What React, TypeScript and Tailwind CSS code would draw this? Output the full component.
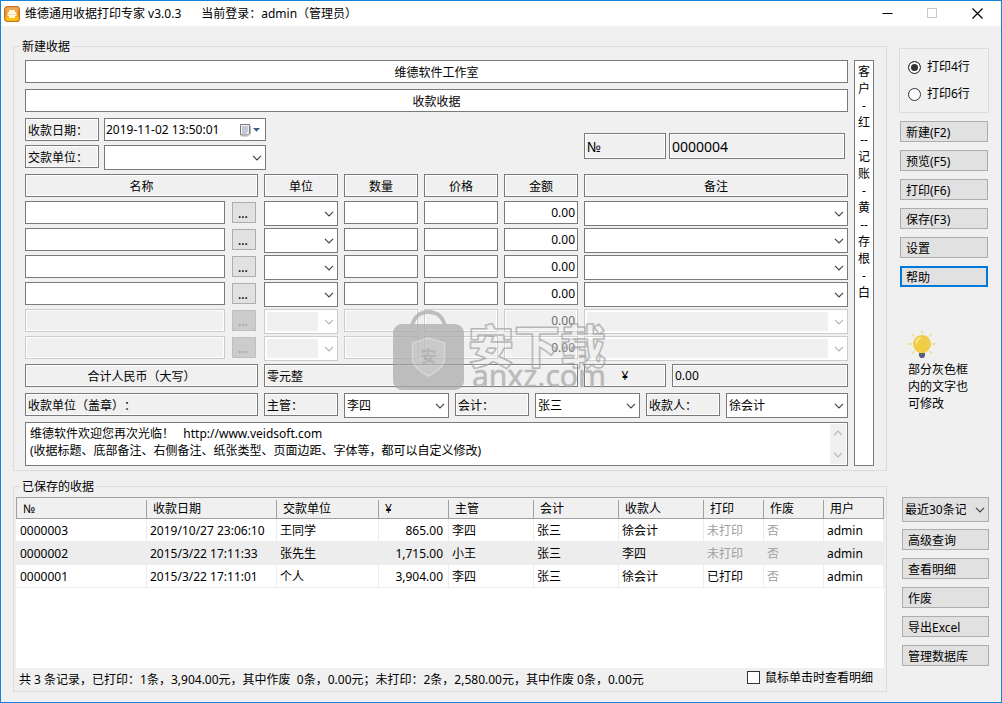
import { useState } from 'react';
import type { ReactNode } from 'react';
import clsx from 'clsx';

const field = 'block h-[23px] min-w-0 border border-[#7a7a7a] px-[2px] outline-none';
const gray = 'bg-[#f0f0f0] shadow-[inset_0_0_0_1px_#fff]';
const off = 'bg-[#f0f0f0] border-[#cccccc] text-[#6d6d6d] shadow-[inset_0_0_0_1px_#fff]';

const itemGrid = 'grid grid-cols-[233px_74px_74px_74px_74px_1fr] gap-x-[6px]';

const lines = [
  { id: 1, disabled: false },
  { id: 2, disabled: false },
  { id: 3, disabled: false },
  { id: 4, disabled: false },
  { id: 5, disabled: true },
  { id: 6, disabled: true },
];

const columns = [
  { title: '№', width: 'w-[131px]' },
  { title: '收款日期', width: 'w-[130px]' },
  { title: '交款单位', width: 'w-[102px]' },
  { title: '¥', width: 'w-[70px]' },
  { title: '主管', width: 'w-[85px]' },
  { title: '会计', width: 'w-[85px]' },
  { title: '收款人', width: 'w-[85px]' },
  { title: '打印', width: 'w-[60px]' },
  { title: '作废', width: 'w-[60px]' },
  { title: '用户', width: '' },
];

const receipts = [
  ['0000003', '2019/10/27 23:06:10', '王同学', '865.00', '李四', '张三', '徐会计', '未打印', '否', 'admin'],
  ['0000002', '2015/3/22 17:11:33', '张先生', '1,715.00', '小王', '张三', '李四', '未打印', '否', 'admin'],
  ['0000001', '2015/3/22 17:11:01', '个人', '3,904.00', '李四', '张三', '徐会计', '已打印', '否', 'admin'],
];

const copies = ['客', '户', '-', '红', '--', '记', '账', '-', '黄', '--', '存', '根', '-', '白'].join('\n');

function Chevron({ className }: { className?: string }) {
  return (
    <svg viewBox="0 0 10 6" className={clsx('w-[10px] h-[6px]', className)} fill="none" stroke="currentColor" strokeWidth="1.2">
      <path d="M1 0.8 L5 4.8 L9 0.8" />
    </svg>
  );
}

function Combo({ label, value = '', disabled, className, tone = 'bg-white border-[#7a7a7a]' }: {
  label: string;
  value?: string;
  disabled?: boolean;
  className?: string;
  tone?: string;
}) {
  return (
    <div className={clsx('relative h-[25px] min-w-0 border', disabled ? 'bg-white border-[#cccccc]' : tone, className)}>
      <select
        aria-label={label}
        disabled={disabled}
        defaultValue={value}
        className={clsx(
          'block w-full h-full appearance-none outline-none opacity-100',
          disabled ? 'bg-[#f0f0f0] border-2 border-r-[19px] border-white' : 'pl-[2px] pr-[22px]'
        )}
      >
        <option value={value}>{value}</option>
      </select>
      <Chevron className={clsx('absolute right-[3px] top-[9px] pointer-events-none', disabled ? 'text-[#b5b5b5]' : 'text-[#444444]')} />
    </div>
  );
}

function Tag({ label, value, className }: { label: string; value: string; className?: string }) {
  return <input aria-label={label} defaultValue={value} className={clsx(field, gray, className)} />;
}

function PushButton({ children, primary }: { children: ReactNode; primary?: boolean }) {
  return (
    <button
      type="button"
      className={clsx(
        'block w-full h-[21px] bg-[#e1e1e1] text-left',
        primary ? 'border-2 border-[#0078d7] px-[4px] leading-[19px]' : 'border border-[#adadad] px-[5px] leading-[21px]'
      )}
    >
      {children}
    </button>
  );
}

function AppIcon() {
  return (
    <svg viewBox="0 0 16 16" className="w-4 h-4">
      <defs>
        <linearGradient id="appIcon" x1="0" y1="0" x2="0" y2="1">
          <stop offset="0" stopColor="#eeb070" />
          <stop offset="0.5" stopColor="#f0921c" />
          <stop offset="1" stopColor="#ffe00a" />
        </linearGradient>
      </defs>
      <rect x="0.6" y="0.6" width="14.8" height="14.8" rx="3" fill="url(#appIcon)" stroke="#c9701c" strokeWidth="1.2" />
      <path d="M5 4h6v2h1.500v4H11v2H5v-2H3.500V6H5z" fill="#fff6dc" />
      <path d="M4.500 8.500h7" stroke="#f6dcae" strokeWidth="1" />
    </svg>
  );
}

function CalendarIcon() {
  return (
    <svg viewBox="0 0 22 14" className="w-[22px] h-[14px]">
      <path d="M1.500 1.500h9v8.500l-2 2h-7z" fill="#eef1f6" stroke="#7d7678" />
      <path d="M3 4h6M3 6h6M3 8h6M3 10h5M4 3v8M6 3v8M8 3v6" stroke="#a9b4c6" strokeWidth="0.8" />
      <path d="M11.500 3v8l-2 2H2" fill="none" stroke="#b9b4b4" />
      <path d="M14 5h7l-3.500 3.800z" fill="#3c6080" />
    </svg>
  );
}

function Bulb() {
  return (
    <svg viewBox="0 0 28 28" className="w-7 h-7">
      <g stroke="#f3d98a" strokeWidth="1.400" strokeLinecap="round">
        <path d="M14 0.800v2M4.500 4.500l1.500 1.500M23.500 4.500l-1.500 1.500M0.800 14h2.500M24.500 14h2.500M4.500 23l1.500-1.500M23.500 23l-1.500-1.500" />
      </g>
      <path d="M14 5a9 9 0 0 0-5.500 16c1.500 1 2.300 1.800 2.500 2.500h6c.2-.7 1-1.500 2.500-2.500A9 9 0 0 0 14 5z" fill="#f0cd45" />
      <path d="M8.500 13a5.500 5.500 0 0 1 4-5" fill="none" stroke="#fbeeb4" strokeWidth="1.500" strokeLinecap="round" />
      <path d="M11 23h6v3l-1.500 2h-3L11 26z" fill="#56607f" />
    </svg>
  );
}

function Watermark() {
  return (
    <svg viewBox="0 0 224 96" className="absolute left-[379px] top-[254px] w-[224px] h-[96px] pointer-events-none opacity-70" aria-hidden="true">
      <path d="M18 20C21 6 28 3 35.500 3S50 6 53 20" fill="none" stroke="#a8a8a8" strokeWidth="4" />
      <rect x="0" y="15" width="71" height="66" rx="9" fill="#a8a8a8" />
      <path d="M35.500 29l16 5v15c0 8-7 13-16 18-9-5-16-10-16-18V34z" fill="#b9b9b9" stroke="#cccccc" strokeWidth="1.500" />
      <text x="35.500" y="53" textAnchor="middle" fontSize="16" fontWeight="700" fill="#9c9c9c">安</text>
      <text x="75" y="54" fontSize="46" fontWeight="900" fill="#f0f0f0" fillOpacity="0.25" stroke="#a0a0a0" strokeWidth="1.500" strokeLinejoin="round">安下载</text>
      <text x="79" y="78" fontSize="30" fill="#a4a4a4" stroke="#a4a4a4" strokeWidth="0.500">anxz.com</text>
    </svg>
  );
}

function TitleBar() {
  return (
    <header className="flex items-center h-[25px] bg-white pl-[3px]">
      <AppIcon />
      <h1 className="ml-[5px] whitespace-pre">{'维德通用收据打印专家 v3.0.3'}</h1>
      <span className="ml-5">当前登录：admin（管理员）</span>
      <div className="ml-auto flex pr-[1px]">
        <button type="button" aria-label="最小化" className="w-[45px] h-[25px] grid place-items-center">
          <svg viewBox="0 0 11 11" className="w-[11px] h-[11px]"><path d="M0.500 5.500h10" stroke="#000" /></svg>
        </button>
        <button type="button" aria-label="最大化" disabled className="w-[45px] h-[25px] grid place-items-center">
          <svg viewBox="0 0 11 11" className="w-[11px] h-[11px]"><rect x="0.500" y="0.500" width="9" height="9" fill="none" stroke="#c8c8c8" /></svg>
        </button>
        <button type="button" aria-label="关闭" className="w-[45px] h-[25px] grid place-items-center">
          <svg viewBox="0 0 11 11" className="w-[11px] h-[11px]"><path d="M0.500 0.500l10 10M10.500 0.500l-10 10" stroke="#000" strokeWidth="1.200" /></svg>
        </button>
      </div>
    </header>
  );
}

function ReceiptForm() {
  return (
    <fieldset className="min-w-0 border border-[#dcdcdc]">
      <legend className="ml-[6px] px-[2px] pt-[2px] leading-[16px]">新建收据</legend>
      <div className="relative flex gap-[6px] pt-[5px] pb-[4px] pl-[11px] pr-[12px]">
        <div className="flex-1 min-w-0">
          <input aria-label="公司名称" defaultValue="维德软件工作室" className={clsx(field, 'w-full bg-white text-center mb-[6px]')} />
          <input aria-label="收据标题" defaultValue="收款收据" className={clsx(field, 'w-full bg-white text-center mb-[6px]')} />

          {/* Date, payer and receipt number */}
          <div className="flex gap-[6px] mb-1">
            <div className="w-[553px] space-y-1">
              <div className="flex gap-[5px]">
                <Tag label="日期标签" value="收款日期：" className="w-[74px]" />
                <div className="flex items-center w-[162px] h-[23px] bg-white border border-[#7a7a7a] pr-[4px]">
                  <input aria-label="收款日期" defaultValue="2019-11-02 13:50:01" className="flex-1 min-w-0 pl-[1px] outline-none" />
                  <CalendarIcon />
                </div>
              </div>
              <div className="flex gap-[5px]">
                <Tag label="交款标签" value="交款单位：" className="w-[74px]" />
                <Combo label="交款单位" className="w-[162px]" />
              </div>
            </div>
            <div className="flex-1 min-w-0 flex items-center gap-[3px] pt-1 pr-[3px]">
              <input aria-label="编号标签" defaultValue="№" className={clsx('w-[82px] h-[26px] border border-[#7a7a7a] px-[2px] text-sm', gray)} />
              <input aria-label="编号" defaultValue="0000004" className={clsx('flex-1 min-w-0 h-[26px] border border-[#7a7a7a] px-[2px] text-sm', gray)} />
            </div>
          </div>

          {/* Item lines */}
          <div className={clsx(itemGrid, 'mb-1')}>
            {['名称', '单位', '数量', '价格', '金额', '备注'].map((h) => (
              <Tag key={h} label={`${h}标题`} value={h} className="w-full text-center" />
            ))}
          </div>
          <div className="space-y-[2px] mb-[3px]">
            {lines.map(({ id, disabled }) => {
              const look = clsx(field, 'w-full', disabled ? off : 'bg-white');
              return (
                <div key={id} className={itemGrid}>
                  <div className="flex items-center h-[23px] gap-[7px] pr-[2px]">
                    <input aria-label={`名称${id}`} disabled={disabled} className={clsx(look, 'flex-1')} />
                    <button
                      type="button"
                      disabled={disabled}
                      aria-label={`选择名称${id}`}
                      className={clsx(
                        'w-6 h-[21px] pr-[2px] border leading-[21px] font-medium',
                        disabled ? 'bg-[#cccccc] border-[#bfbfbf] text-[#a0a0a0]' : 'bg-[#e1e1e1] border-[#adadad]'
                      )}
                    >
                      ...
                    </button>
                  </div>
                  <Combo label={`单位${id}`} disabled={disabled} />
                  <input aria-label={`数量${id}`} disabled={disabled} className={look} />
                  <input aria-label={`价格${id}`} disabled={disabled} className={look} />
                  <input aria-label={`金额${id}`} disabled={disabled} defaultValue="0.00" className={clsx(look, 'text-right')} />
                  <Combo label={`备注${id}`} disabled={disabled} />
                </div>
              );
            })}
          </div>

          {/* Totals and signatures */}
          <div className="flex gap-[6px] mb-[6px]">
            <Tag label="合计标签" value="合计人民币（大写）" className="w-[233px] text-center" />
            <Tag label="大写金额" value="零元整" className="w-[314px]" />
            <Tag label="货币符号" value="¥" className="w-[82px] text-center" />
            <Tag label="合计金额" value="0.00" className="flex-1" />
          </div>
          <div className="flex gap-[6px] mb-1">
            <Tag label="盖章标签" value="收款单位（盖章）：" className="w-[233px]" />
            <Tag label="主管标签" value="主管：" className="w-[74px]" />
            <Combo label="主管" value="李四" className="w-[105px]" />
            <Tag label="会计标签" value="会计：" className="w-[74px]" />
            <Combo label="会计" value="张三" className="w-[105px]" />
            <Tag label="收款人标签" value="收款人：" className="w-[74px]" />
            <Combo label="收款人" value="徐会计" className="flex-1" />
          </div>

          <div className="flex h-[44px] bg-white border border-[#7a7a7a] p-[1px]">
            <textarea
              aria-label="底部备注"
              className="flex-1 min-w-0 resize-none overflow-hidden outline-none pl-[3px] pt-[1px] leading-[17px]"
              defaultValue={'维德软件欢迎您再次光临！   http://www.veidsoft.com\n(收据标题、底部备注、右侧备注、纸张类型、页面边距、字体等，都可以自定义修改)'}
            />
            <div className="w-4 bg-[#f0f0f0] flex flex-col items-center justify-between py-[6px] text-[#b5b5b5]">
              <Chevron className="rotate-180" />
              <Chevron />
            </div>
          </div>
        </div>

        <textarea
          aria-label="右侧备注"
          defaultValue={copies}
          className="w-5 shrink-0 resize-none overflow-hidden outline-none bg-white border border-[#7a7a7a] pt-[2px] text-center leading-[17px]"
        />
        <Watermark />
      </div>
    </fieldset>
  );
}

function SavedReceipts() {
  return (
    <fieldset className="min-w-0 min-h-0 border border-[#dcdcdc]">
      <legend className="ml-[6px] px-[2px] pt-[2px] leading-[16px]">已保存的收据</legend>
      <div className="h-full flex flex-col px-[2px] pt-[2px]">
        <div className="flex-1 min-h-[120px] bg-white">
          <table className="w-full table-fixed border-separate border-spacing-0">
            <thead>
              <tr>
                {columns.map((c, i) => (
                  <th
                    key={c.title}
                    className={clsx(
                      'h-[22px] p-0 bg-[#f0f0f0] border-y border-[#a0a0a0] text-left font-normal',
                      c.width,
                      i === 0 && 'border-l',
                      i === columns.length - 1 && 'border-r'
                    )}
                  >
                    <div className={clsx('mt-[2px] h-[18px] pl-[6px] leading-[18px]', i < columns.length - 1 && 'border-r border-[#a0a0a0]')}>
                      {c.title}
                    </div>
                  </th>
                ))}
              </tr>
            </thead>
            <tbody>
              {receipts.map((row, r) => (
                <tr key={row[0]} className={r % 2 ? 'bg-[#ededed]' : 'bg-white'}>
                  {row.map((cell, i) => (
                    <td
                      key={i}
                      className={clsx(
                        'h-[23px] pt-[2px] pb-0 leading-[20px] whitespace-nowrap border-b border-r border-[#ededed]',
                        i === 0 ? 'pl-[4px]' : 'pl-[3px]',
                        i === 3 ? 'text-right pr-[5px]' : 'pr-0',
                        (cell === '未打印' || cell === '否') && 'text-[#a0a0a0]'
                      )}
                    >
                      {cell}
                    </td>
                  ))}
                </tr>
              ))}
            </tbody>
          </table>
        </div>
        <div className="flex items-center justify-between h-[23px] pl-[3px] pr-[11px]">
          <p className="whitespace-pre">
            {'共 3 条记录，已打印：1条，3,904.00元，其中作废  0条，0.00元；未打印：2条，2,580.00元，其中作废 0条，0.00元'}
          </p>
          <label className="flex items-center gap-[5px] pb-1">
            <input type="checkbox" className="appearance-none w-[13px] h-[13px] bg-white border border-[#333333] checked:bg-[#333333]" />
            鼠标单击时查看明细
          </label>
        </div>
      </div>
    </fieldset>
  );
}

export default function App() {
  const [rows, setRows] = useState(4);

  return (
    <div
      lang="zh-CN"
      className="min-h-screen flex flex-col border border-[#1883d7] bg-[#f0f0f0] text-black text-[12px] leading-[18px] font-['Noto_Sans','Noto_Sans_CJK_SC',sans-serif] [text-spacing-trim:space-all]"
    >
      <TitleBar />
      <main className="flex-1 grid grid-cols-[1fr_90px] grid-rows-[auto_1fr] gap-x-3 gap-y-[6px] pt-[11px] pb-[10px] px-3">
        <ReceiptForm />

        <aside className="pt-[11px]">
          <div className="h-[65px] border border-[#dcdcdc] pl-2 pt-[9px] space-y-[9px]" role="radiogroup" aria-label="打印行数">
            {[4, 6].map((n) => (
              <label key={n} className="flex items-center gap-[6px]">
                <input
                  type="radio"
                  name="rows"
                  checked={rows === n}
                  onChange={() => setRows(n)}
                  className="appearance-none w-[13px] h-[13px] rounded-full bg-white border border-[#333333] checked:bg-[#333333] checked:shadow-[inset_0_0_0_2px_#fff]"
                />
                {`打印${n}行`}
              </label>
            ))}
          </div>
          <div className="mt-2 px-[1px] space-y-2">
            <PushButton>新建(F2)</PushButton>
            <PushButton>预览(F5)</PushButton>
            <PushButton>打印(F6)</PushButton>
            <PushButton>保存(F3)</PushButton>
            <PushButton>设置</PushButton>
            <PushButton primary>帮助</PushButton>
          </div>
          <div className="mt-[43px] pl-[9px]">
            <Bulb />
            <p className="mt-[3px] w-[60px] leading-[17px]">部分灰色框内的文字也可修改</p>
          </div>
        </aside>

        <SavedReceipts />

        <aside className="pt-5 pl-[3px]">
          <Combo label="记录范围" value="最近30条记录" tone="bg-[#e1e1e1] border-[#adadad]" className="mb-[7px]" />
          <div className="space-y-2">
            <PushButton>高级查询</PushButton>
            <PushButton>查看明细</PushButton>
            <PushButton>作废</PushButton>
            <PushButton>导出Excel</PushButton>
            <PushButton>管理数据库</PushButton>
          </div>
        </aside>
      </main>
    </div>
  );
}
